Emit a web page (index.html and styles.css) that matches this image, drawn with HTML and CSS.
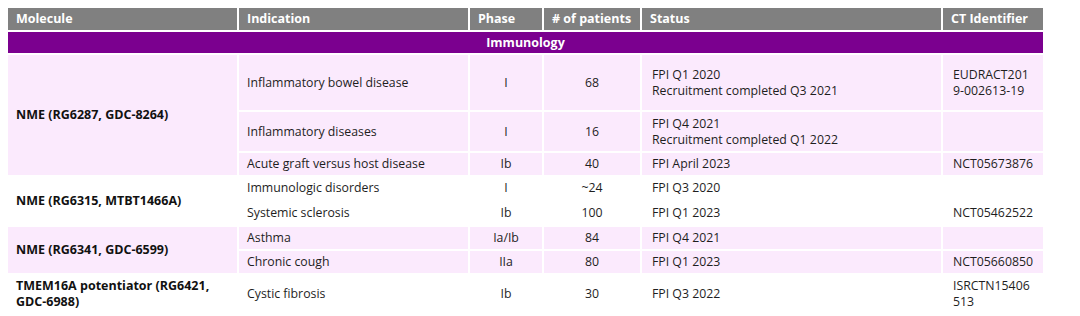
FILE: index.html
```html
<!DOCTYPE html>
<html>
<head>
<meta charset="utf-8">
<link rel="stylesheet" href="styles.css">
</head>
<body>
<table class="trials">
  <colgroup>
    <col class="c-mol"><col class="c-ind"><col class="c-phase"><col class="c-pat"><col class="c-status"><col class="c-ct">
  </colgroup>
  <thead>
    <tr class="head">
      <th>Molecule</th><th>Indication</th><th>Phase</th><th># of patients</th><th>Status</th><th>CT Identifier</th>
    </tr>
  </thead>
  <tbody>
    <tr class="section"><td colspan="6">Immunology</td></tr>

    <tr class="pink r1">
      <td class="mol" rowspan="3">NME (RG6287, GDC-8264)</td>
      <td>Inflammatory bowel disease</td><td class="ctr">I</td><td class="ctr">68</td>
      <td class="status">FPI Q1 2020<br>Recruitment completed Q3 2021</td>
      <td class="ct">EUDRACT201<br>9-002613-19</td>
    </tr>
    <tr class="pink r2">
      <td>Inflammatory diseases</td><td class="ctr">I</td><td class="ctr">16</td>
      <td class="status">FPI Q4 2021<br>Recruitment completed Q1 2022</td>
      <td class="ct"></td>
    </tr>
    <tr class="pink r3">
      <td>Acute graft versus host disease</td><td class="ctr">Ib</td><td class="ctr">40</td>
      <td class="status">FPI April 2023</td>
      <td class="ct">NCT05673876</td>
    </tr>

    <tr class="r4">
      <td class="mol" rowspan="2">NME (RG6315, MTBT1466A)</td>
      <td>Immunologic disorders</td><td class="ctr">I</td><td class="ctr">~24</td>
      <td class="status">FPI Q3 2020</td><td class="ct"></td>
    </tr>
    <tr class="r5">
      <td>Systemic sclerosis</td><td class="ctr">Ib</td><td class="ctr">100</td>
      <td class="status">FPI Q1 2023</td><td class="ct">NCT05462522</td>
    </tr>

    <tr class="pink r6">
      <td class="mol" rowspan="2">NME (RG6341, GDC-6599)</td>
      <td>Asthma</td><td class="ctr">Ia/Ib</td><td class="ctr">84</td>
      <td class="status">FPI Q4 2021</td><td class="ct"></td>
    </tr>
    <tr class="pink r7">
      <td>Chronic cough</td><td class="ctr">IIa</td><td class="ctr">80</td>
      <td class="status">FPI Q1 2023</td><td class="ct">NCT05660850</td>
    </tr>

    <tr class="r8">
      <td class="mol">TMEM16A potentiator (RG6421, GDC-6988)</td>
      <td>Cystic fibrosis</td><td class="ctr">Ib</td><td class="ctr">30</td>
      <td class="status">FPI Q3 2022</td><td class="ct">ISRCTN15406<br>513</td>
    </tr>
  </tbody>
</table>
</body>
</html>
```

FILE: styles.css
```css
html, body {
  margin: 0;
  padding: 0;
  background: #ffffff;
}
body {
  padding: 6px 0 0 6px;
  font-family: "Open Sans", "Noto Sans", "Liberation Sans", sans-serif;
  font-size: 12.3px;
  line-height: 16px;
  color: #1e1e1e;
}
.trials {
  border-collapse: collapse;
  table-layout: fixed;
  width: 1037px;
}
.c-mol { width: 231px; }
.c-ind { width: 231px; }
.c-phase { width: 74px; }
.c-pat { width: 98px; }
.c-status { width: 301px; }
.c-ct { width: 102px; }

.trials th,
.trials td {
  border: 2px solid #ffffff;
  padding: 0 8px;
  vertical-align: middle;
  text-align: left;
}
.head th {
  background: #808080;
  color: #ffffff;
  font-weight: 700;
  font-size: 12.5px;
  height: 22px;
  padding-left: 8px;
}
.section td {
  background: #7b008f;
  color: #ffffff;
  font-weight: 700;
  font-size: 12.5px;
  text-align: center;
  height: 21px;
}
.pink td { background: #fbeafd; }
.mol { font-weight: 700; font-size: 12.5px; color: #111111; }
.ctr { text-align: center !important; }
.status { padding-left: 10px !important; }
.ct { padding-left: 10px !important; padding-right: 4px !important; }

.r1 td { height: 55px; }
.r2 td { height: 39px; }
.r3 td { height: 22px; }
.r4 td { height: 22px; }
.r5 td { height: 24px; }
.r6 td { height: 22px; }
.r7 td { height: 22px; }
.r8 td { height: 38px; }
```
